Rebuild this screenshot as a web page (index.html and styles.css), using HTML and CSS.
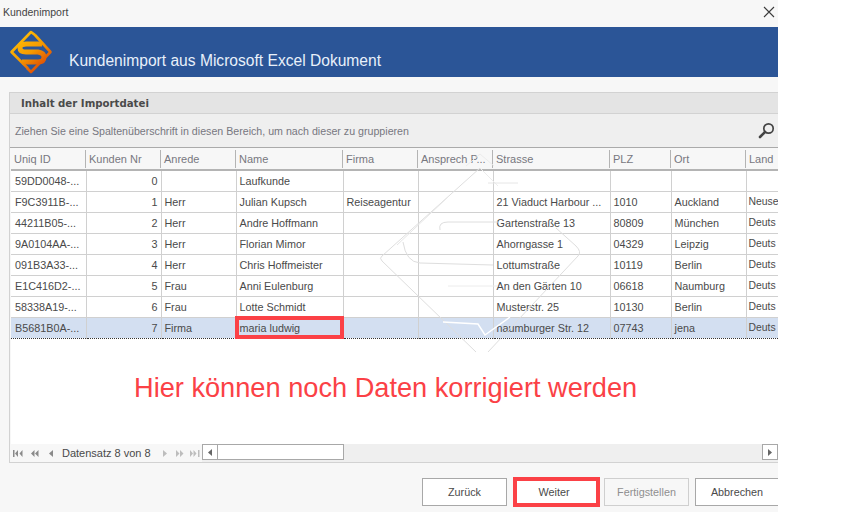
FILE: index.html
```html
<!DOCTYPE html>
<html lang="de">
<head>
    <meta charset="UTF-8">
    <title>Kundenimport</title>
    <link rel="stylesheet" href="styles.css">
</head>
<body>
    <div class="window">
        <div class="title-bar">
            <span>Kundenimport</span>
            <svg class="close-icon" width="12" height="12" viewBox="0 0 12 12"><path d="M1 1 L11 11 M11 1 L1 11" stroke="#3c3c3c" stroke-width="1.1" fill="none"/></svg>
        </div>

        <div class="banner">
            <svg class="logo" width="44" height="44" viewBox="0 0 44 44" fill="none">
                <defs>
                    <linearGradient id="logoFill" gradientUnits="userSpaceOnUse" x1="8" y1="4" x2="36" y2="40">
                        <stop offset="0" stop-color="#ffc107"/>
                        <stop offset="0.5" stop-color="#f59a00"/>
                        <stop offset="1" stop-color="#d83c08"/>
                    </linearGradient>
                </defs>
                <path d="M26 5 L22 2 L2.500 22 L19 38.500 M25 39 L22 42 M18 38 L22 42 L41.500 22 L26 5" stroke="url(#logoFill)" stroke-width="2.600" stroke-linejoin="round"/>
                <path d="M33 14 L17 14 Q11 14 11 18 Q11 22 17 22 L29 22 Q35 23 35 27 Q35 32 29 32 L13 32" stroke="url(#logoFill)" stroke-width="5"/>
            </svg>
            <h1>Kundenimport aus Microsoft Excel Dokument</h1>
        </div>

        <div class="group">
            <div class="group-title">Inhalt der Importdatei</div>
            <div class="group-panel">
                <span>Ziehen Sie eine Spaltenüberschrift in diesen Bereich, um nach dieser zu gruppieren</span>
                <svg class="search-icon" width="17" height="17" viewBox="0 0 17 17"><circle cx="10.500" cy="6.500" r="4.700" fill="none" stroke="#444" stroke-width="1.700"/><path d="M7 10 L2 15" stroke="#444" stroke-width="2.600" stroke-linecap="round"/></svg>
            </div>

            <div class="grid-area">
                <table class="grid">
                    <colgroup>
                        <col class="col-id"><col class="col-nr"><col class="col-anrede"><col class="col-name"><col class="col-firma">
                        <col class="col-ansprech"><col class="col-strasse"><col class="col-plz"><col class="col-ort"><col class="col-land">
                    </colgroup>
                    <thead>
                        <tr>
                            <th><div>Uniq ID</div></th><th><div>Kunden Nr</div></th><th><div>Anrede</div></th><th><div>Name</div></th><th><div>Firma</div></th>
                            <th><div>Ansprech P...</div></th><th><div>Strasse</div></th><th><div>PLZ</div></th><th><div>Ort</div></th><th><div>Land</div></th>
                        </tr>
                    </thead>
                    <tbody>
                        <tr><td>59DD0048-...</td><td class="num">0</td><td></td><td>Laufkunde</td><td></td><td></td><td></td><td></td><td></td><td></td></tr>
                        <tr><td>F9C3911B-...</td><td class="num">1</td><td>Herr</td><td>Julian Kupsch</td><td>Reiseagentur</td><td></td><td>21 Viaduct Harbour ...</td><td>1010</td><td>Auckland</td><td>Neuse</td></tr>
                        <tr><td>44211B05-...</td><td class="num">2</td><td>Herr</td><td>Andre Hoffmann</td><td></td><td></td><td>Gartenstraße 13</td><td>80809</td><td>München</td><td>Deuts</td></tr>
                        <tr><td>9A0104AA-...</td><td class="num">3</td><td>Herr</td><td>Florian Mimor</td><td></td><td></td><td>Ahorngasse 1</td><td>04329</td><td>Leipzig</td><td>Deuts</td></tr>
                        <tr><td>091B3A33-...</td><td class="num">4</td><td>Herr</td><td>Chris Hoffmeister</td><td></td><td></td><td>Lottumstraße</td><td>10119</td><td>Berlin</td><td>Deuts</td></tr>
                        <tr><td>E1C416D2-...</td><td class="num">5</td><td>Frau</td><td>Anni Eulenburg</td><td></td><td></td><td>An den Gärten 10</td><td>06618</td><td>Naumburg</td><td>Deuts</td></tr>
                        <tr><td>58338A19-...</td><td class="num">6</td><td>Frau</td><td>Lotte Schmidt</td><td></td><td></td><td>Musterstr. 25</td><td>10130</td><td>Berlin</td><td>Deuts</td></tr>
                        <tr class="selected"><td>B5681B0A-...</td><td class="num">7</td><td>Firma</td><td class="marked">maria ludwig</td><td></td><td></td><td>naumburger Str. 12</td><td>07743</td><td>jena</td><td>Deuts</td></tr>
                    </tbody>
                </table>
                <p class="note">Hier können noch Daten korrigiert werden</p>
            </div>

            <div class="grid-footer">
                <div class="nav">
                    <svg width="11" height="7" viewBox="0 0 11 7"><path d="M0 0H1.500V7H0Z M5 0V7L2 3.500Z M9.500 0V7L6.500 3.500Z"/></svg>
                    <svg class="nav-second" width="8" height="7" viewBox="0 0 8 7"><path d="M3.500 0V7L0 3.500Z M7.500 0V7L4 3.500Z"/></svg>
                    <svg class="nav-third" width="4" height="7" viewBox="0 0 4 7"><path d="M4 0V7L0 3.500Z"/></svg>
                    <span class="nav-label">Datensatz 8 von 8</span>
                    <svg class="nav-off" width="4" height="7" viewBox="0 0 4 7"><path d="M0 0V7L4 3.500Z"/></svg>
                    <svg class="nav-off nav-next" width="8" height="7" viewBox="0 0 8 7"><path d="M0 0V7L3.500 3.500Z M4 0V7L7.500 3.500Z"/></svg>
                    <svg class="nav-off nav-last" width="10" height="7" viewBox="0 0 10 7"><path d="M0 0V7L3 3.500Z M3.500 0V7L6.500 3.500Z M8 0H9.500V7H8Z"/></svg>
                </div>
                <div class="scrollbar">
                    <div class="scroll-btn"><svg width="4" height="7" viewBox="0 0 4 7"><path d="M4 0V7L0 3.500Z"/></svg></div>
                    <div class="scroll-thumb"></div>
                    <div class="scroll-track"></div>
                    <div class="scroll-btn"><svg width="4" height="7" viewBox="0 0 4 7"><path d="M0 0V7L4 3.500Z"/></svg></div>
                </div>
            </div>
        </div>

        <div class="actions">
            <button class="btn">Zurück</button>
            <button class="btn btn-marked">Weiter</button>
            <button class="btn btn-disabled">Fertigstellen</button>
            <button class="btn btn-last">Abbrechen</button>
        </div>

        <svg class="watermark" width="204" height="204" viewBox="0 0 204 204" fill="none" stroke="#dedede">
            <path d="M102 16 L4 104 Q1 106 4 109 L98 200"/>
            <path d="M110 200 L200 104 Q204 100 198 94 L178 76"/>
            <path d="M102 16 L120 34 M102 2 L88 14 M102 2 L116 14" stroke="#ececec"/>
            <path d="M19 93 L70 45" stroke="#e6e6e6"/>
            <path d="M120 70 L70 70 Q60 70 62 78"/>
            <path d="M25 90 Q28 110 42 111 L115 113"/>
            <path d="M70 134 L120 134" stroke="#ececec"/>
            <path d="M140 31 L110 31" stroke="#e6e6e6"/>
            <path d="M65 170 L100 172 L107 183 L132 165" stroke="#ffffff" stroke-width="1.500"/>
        </svg>
    </div>
</body>
</html>
```

FILE: styles.css
```css
* {
    margin: 0;
    padding: 0;
    box-sizing: border-box;
}

body {
    font-family: 'Liberation Sans', Tahoma, sans-serif;
    font-size: 11px;
    background: white;
}

.window {
    position: relative;
    width: 778px;
    height: 512px;
    background: #f7f7f7;
    overflow: hidden;
    color: #4a4a4a;
}

.title-bar {
    height: 27px;
    padding: 0 3px 3px 3px;
    display: flex;
    align-items: center;
    justify-content: space-between;
    font-size: 10.5px;
    color: #444;
}

.banner {
    height: 50px;
    background: #2b5597;
    display: flex;
    padding-left: 9px;
    padding-top: 3px;
}

.logo {
    flex: none;
}

.banner h1 {
    font-family: 'Liberation Sans', Arial, sans-serif;
    font-weight: normal;
    font-size: 15.6px;
    color: #e8f0fa;
    margin-left: 16px;
    margin-top: 22px;
}

.group {
    margin: 15px 0 0 9px;
    height: 371px;
    border: 1px solid #d2d2d2;
    border-right: none;
    display: flex;
    flex-direction: column;
}

.group-title {
    height: 21px;
    line-height: 22px;
    padding-left: 11px;
    background: #e4e4e4;
    border-bottom: 1px solid #d2d2d2;
    font-family: 'DejaVu Sans', sans-serif;
    font-weight: bold;
    font-size: 10.2px;
    color: #4a4a4a;
}

.group-panel {
    height: 34px;
    padding: 0 3px 0 5px;
    background: #efefef;
    display: flex;
    align-items: center;
    justify-content: space-between;
    font-size: 10.65px;
    color: #77777f;
    border-bottom: 1px solid #aaa;
}

.grid-area {
    flex: 1;
    background: white;
    margin-left: 1px;
}

.grid {
    table-layout: fixed;
    width: 767px;
    border-collapse: collapse;
}

.col-id { width: 75px; }
.col-nr { width: 75px; }
.col-anrede { width: 75px; }
.col-name { width: 107px; }
.col-firma { width: 75px; }
.col-ansprech { width: 75px; }
.col-strasse { width: 117px; }
.col-plz { width: 61px; }
.col-ort { width: 75px; }
.col-land { width: 32px; }

.grid th {
    padding: 2px 0 1px;
    background: #f7f7f7;
    border-bottom: 2px solid #b4b4b4;
    font-weight: normal;
    text-align: left;
    color: #77777f;
}

.grid th div {
    height: 18px;
    line-height: 18px;
    padding-left: 3px;
    border-right: 1px solid #b4b4b4;
    white-space: nowrap;
    overflow: hidden;
}

.grid th:last-child div {
    border-right: none;
}

.grid td {
    height: 21px;
    padding: 0 3px;
    border-right: 1px solid #d0d0d0;
    border-bottom: 1px solid #d0d0d0;
    font-size: 10.8px;
    white-space: nowrap;
    overflow: hidden;
    color: #4a4a4a;
}

.grid td:first-child {
    padding-left: 4px;
}

.grid td:last-child {
    padding: 0 0 0 2px;
    font-size: 10.4px;
    border-right: none;
}

.grid td.num {
    text-align: right;
}

.selected td {
    background: #d3dff1;
    border-top: 1px dotted #333;
    border-bottom: 1px dotted #333;
}

.selected td.marked {
    outline: 4px solid #fb4146;
    outline-offset: -3px;
}

.note {
    margin: 33px 0 0 123px;
    font-family: 'Liberation Sans', Arial, sans-serif;
    font-size: 27.2px;
    color: #fb4146;
}

.grid-footer {
    height: 18px;
    background: #efefef;
    display: flex;
    margin-left: 1px;
}

.nav {
    width: 191px;
    flex: none;
    background: #f7f7f7;
    display: flex;
    align-items: center;
    padding-left: 2px;
}

.nav svg {
    fill: #8a8a8a;
    flex: none;
}

.nav .nav-off {
    fill: #bdbdbd;
}

.nav-second {
    margin-left: 7px;
}

.nav-third {
    margin-left: 10px;
}

.nav-next {
    margin-left: 9px;
}

.nav-last {
    margin-left: 6px;
}

.nav-label {
    margin: 0 12px 0 9px;
    width: 89px;
    flex: none;
    white-space: nowrap;
    color: #4a4a4a;
}

.scrollbar {
    flex: 1;
    display: flex;
}

.scroll-btn {
    width: 16px;
    height: 16px;
    flex: none;
    background: white;
    border: 1px solid #a8a8a8;
    display: flex;
    align-items: center;
    justify-content: center;
    fill: #666;
}

.scroll-thumb {
    width: 126px;
    height: 16px;
    background: white;
    border: 1px solid #a8a8a8;
    border-left: none;
}

.scroll-track {
    flex: 1;
}

.actions {
    display: flex;
    align-items: center;
    padding: 14px 0 0 422px;
}

.btn {
    width: 85px;
    height: 28px;
    flex: none;
    background: white;
    border: 1px solid #a8a8a8;
    font-family: 'Liberation Sans', Tahoma, sans-serif;
    font-size: 10.8px;
    color: #4a4a4a;
}

.btn-marked {
    width: 87px;
    height: 30px;
    margin: 0 4px 0 6px;
    padding-right: 5px;
    border: 4px solid #fb4146;
}

.btn-disabled {
    background: #f7f7f7;
    border-color: #cfcfcf;
    color: #8f8f8f;
}

.btn-last {
    width: 83px;
    margin-left: 6px;
    border-right: none;
}

.watermark {
    position: absolute;
    left: 378px;
    top: 152px;
    pointer-events: none;
}
```
